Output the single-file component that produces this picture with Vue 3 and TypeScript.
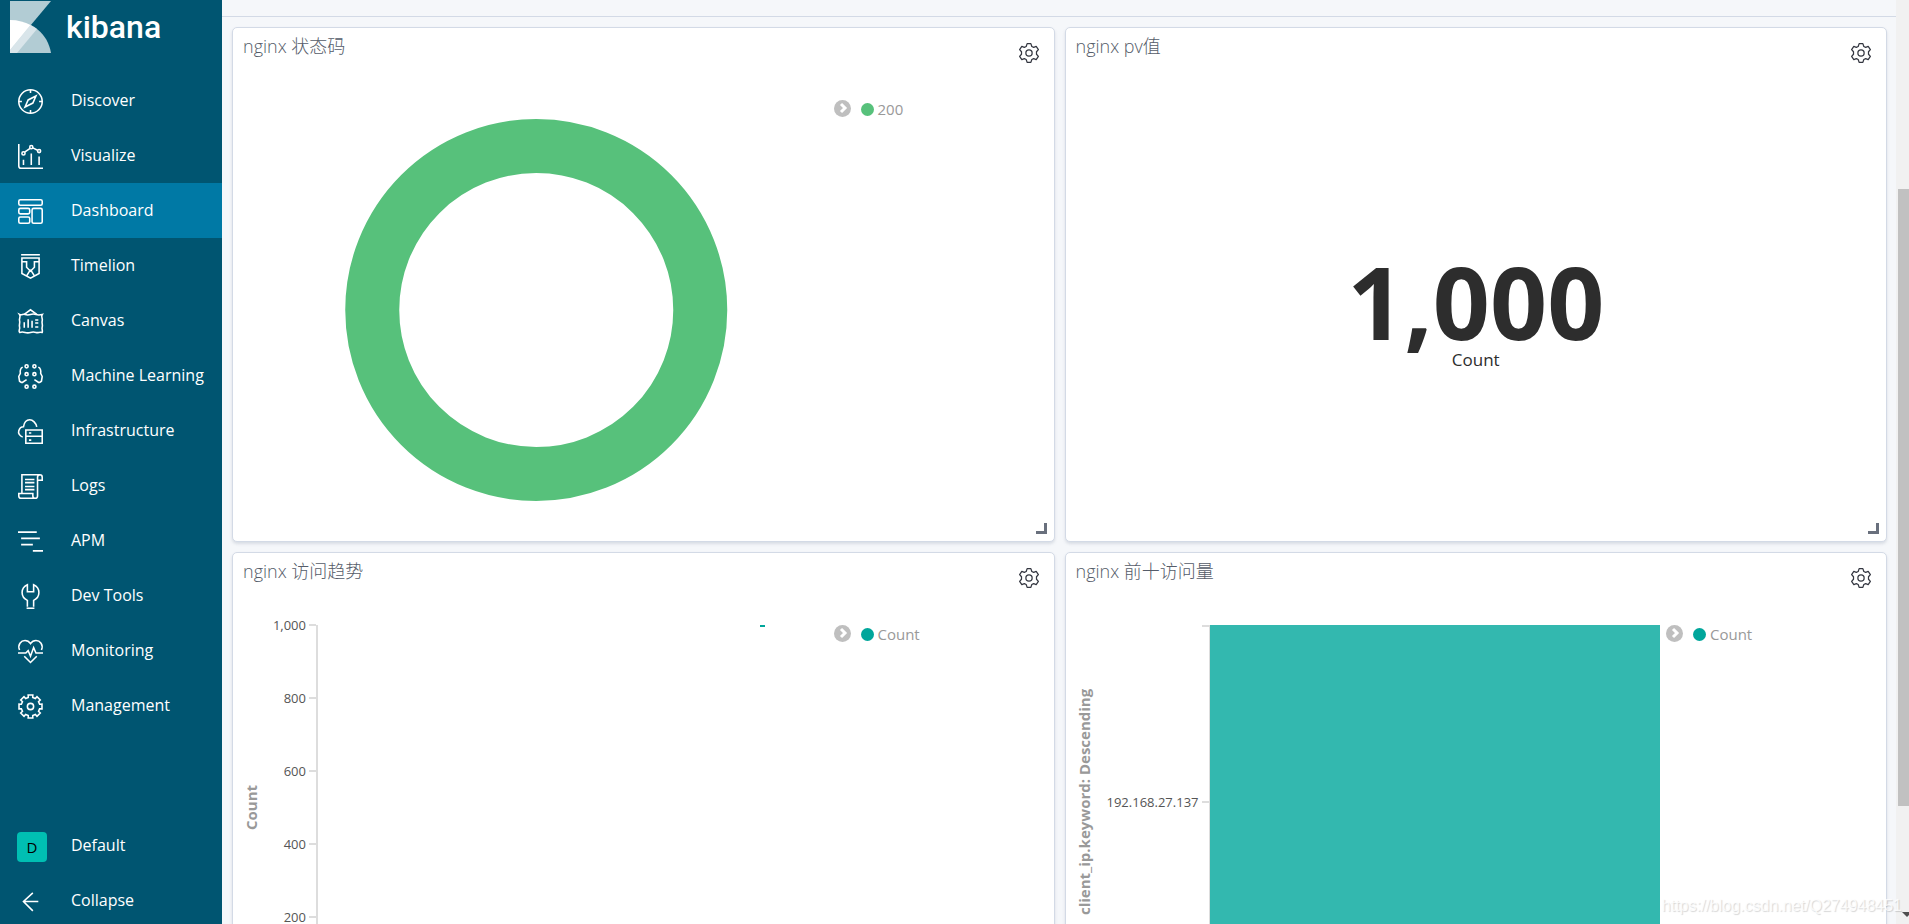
<script setup lang="ts">
interface NavItem {
  label: string
  paths: string[]
}

interface Point {
  x: number
  value: number
}

function gearPath(teeth: number, outer: number, inner: number, tip: number, root: number): string {
  const step = (Math.PI * 2) / teeth
  const points: string[] = []
  for (let i = 0; i < teeth; i++) {
    const mid = i * step - Math.PI / 2
    const corners: [number, number][] = [
      [inner, mid - root],
      [outer, mid - tip],
      [outer, mid + tip],
      [inner, mid + root],
    ]
    for (const [r, a] of corners) {
      points.push(`${(16 + r * Math.cos(a)).toFixed(2)} ${(16 + r * Math.sin(a)).toFixed(2)}`)
    }
  }
  return `M${points.join('L')}Z`
}

const ring = (cx: number, cy: number, r: number) =>
  `M${cx - r} ${cy}a${r} ${r} 0 1 0 ${2 * r} 0a${r} ${r} 0 1 0 ${-2 * r} 0z`

const navItems: NavItem[] = [
  {
    label: 'Discover',
    paths: [ring(16, 16, 15), 'M16 1v4M16 27v4M1 16h4M27 16h4', 'M23 9l-4 9-10 5 4-9z'],
  },
  {
    label: 'Visualize',
    paths: [
      'M1 0v28a3 3 0 0 0 3 3h28',
      ring(7, 12, 2),
      ring(17, 4, 2),
      ring(27, 9, 2),
      'M8.500 10.500l7-5M19 5l6 3M7 20v7M17 12v15M27 16v11',
    ],
  },
  {
    label: 'Dashboard',
    paths: [
      'M3 1h26a2 2 0 0 1 2 2v3a2 2 0 0 1-2 2H3a2 2 0 0 1-2-2V3a2 2 0 0 1 2-2z',
      'M3 12h10a2 2 0 0 1 2 2v3a2 2 0 0 1-2 2H3a2 2 0 0 1-2-2v-3a2 2 0 0 1 2-2z',
      'M3 23h10a2 2 0 0 1 2 2v4a2 2 0 0 1-2 2H3a2 2 0 0 1-2-2v-4a2 2 0 0 1 2-2z',
      'M20 12h9a2 2 0 0 1 2 2v15a2 2 0 0 1-2 2h-9a2 2 0 0 1-2-2V14a2 2 0 0 1 2-2z',
    ],
  },
  {
    label: 'Timelion',
    paths: ['M4 1h24', 'M5 5h22v20l-11 6-11-6z', 'M5 10h6v7l5 5 5-5v-7h6', 'M16 20l-5 8M16 20l5 8'],
  },
  {
    label: 'Canvas',
    paths: [
      'M8 7l8-6 8 6',
      'M2 7c3 1.500 4-1 7 0s4 1 7 0 4-1 7 0 4 1 8 0c-2 3 1 5 0 8s1 5 0 8 1 4 0 7c-4-1-5 1-8 0s-4-1-7 0-4 1-7 0-4-1-7 0c-2-3 1-4 0-7s1-5 0-8 2-5 0-8z',
      'M8 17v7M13 13v11M18 15v9M22 14h4M22 18h4M22 23h4',
    ],
  },
  {
    label: 'Machine Learning',
    paths: [
      ring(11, 3, 2),
      ring(21, 3, 2),
      ring(11, 13, 2),
      ring(21, 13, 2),
      ring(11, 29, 2),
      ring(21, 29, 2),
      'M6 4Q2 6 3 12l-2 4 1 6 3 2M5 24l6-4M26 4q4 2 3 8l2 4-1 6-3 2M27 24l-6-4',
    ],
  },
  {
    label: 'Infrastructure',
    paths: [
      'M6 23C2 22 0 18 1 15s3-5 6-5C8 4 11 1 15 1s8 4 9 9',
      'M10 14h21v17H10zM10 22h21M14 18h3M14 27h3',
    ],
  },
  {
    label: 'Logs',
    paths: [
      'M5 25V1h23a3 3 0 0 1 3 3v4h-6',
      'M28 1a3 3 0 0 0-3 3v24a3 3 0 0 1-3 3H4a3 3 0 0 1-3-3v-3h18v3a3 3 0 0 0 3 3',
      'M9 7h12M9 11h12M9 16h12M9 20h12',
    ],
  },
  { label: 'APM', paths: ['M0 4h24M4 12h24M4 20h15M19 28h13'] },
  {
    label: 'Dev Tools',
    paths: ['M12 29v-8C3 17 3 5 12 1v9h8V1c9 4 9 16 0 20v8', 'M11 31h10'],
  },
  {
    label: 'Monitoring',
    paths: [
      'M2 14C-1 7 4 2 9 2c3 0 5 1 7 4 2-3 4-4 7-4 5 0 10 5 7 12',
      'M0 18h10l3-3 3 7 4-11 3 7h9',
      'M8 22l8 8 8-8',
    ],
  },
  { label: 'Management', paths: [gearPath(8, 15, 12, 0.2, 0.24), ring(16, 16, 4)] },
]

const activeItem = 'Dashboard'
const cog =
  'M13 1h6l1.500 4.500 3 1.500 4-1.500 3.500 5-3 3.500v4l3 3.500-3.500 5-4-1.500-3 1.500L19 31h-6l-1.500-4.500-3-1.500-4 1.500L1 21.500 4 18v-4L1 10.500l3.500-5 4 1.500 3-1.500z'
const cogHole = ring(16, 16, 5)

const countTicks = ['1,000', '800', '600', '400', '200']
const trend: Point[] = [{ x: 86, value: 1000 }]
const maxCount = 1000
</script>

<template>
  <div class="app">
    <aside class="sidebar">
      <a class="brand" href="#">
        <svg class="brand-mark" viewBox="0 0 41 52" aria-hidden="true">
          <path d="M0 0H41L0 49Z" fill="#b2ccd4" />
          <path d="M0 19C22 19 38 33 41 52H0Z" fill="#b2ccd4" />
          <path d="M0 49L20.500 24L27 28L7 52H0Z" fill="#d9e5ea" />
          <path d="M0 19C8 19 15 21 20.500 24L0 49Z" fill="#fff" />
        </svg>
        <span>kibana</span>
      </a>
      <nav class="nav">
        <a
          v-for="item in navItems"
          :key="item.label"
          href="#"
          class="nav-item"
          :class="{ active: item.label === activeItem }"
        >
          <svg class="nav-icon" viewBox="0 0 32 32" aria-hidden="true">
            <path v-for="(d, i) in item.paths" :key="i" :d="d" />
          </svg>
          <span>{{ item.label }}</span>
        </a>
      </nav>
      <div class="nav nav-foot">
        <a class="nav-item" href="#">
          <span class="avatar">D</span>
          <span>Default</span>
        </a>
        <button class="nav-item" type="button">
          <svg class="nav-icon" viewBox="0 0 32 32" aria-hidden="true">
            <path d="M19 5L7 16l12 12M7 16h19" />
          </svg>
          <span>Collapse</span>
        </button>
      </div>
    </aside>

    <main class="content">
      <div class="topbar"></div>
      <div class="grid">
        <section class="panel">
          <header class="panel-head">
            <h2>nginx 状态码</h2>
            <button class="cog" type="button" aria-label="Panel options">
              <svg viewBox="0 0 32 32"><path :d="cog" /><path :d="cogHole" /></svg>
            </button>
          </header>
          <div class="panel-body">
            <svg class="donut" viewBox="0 0 590 437" aria-hidden="true">
              <circle cx="295" cy="219" r="164" />
            </svg>
            <div class="legend">
              <button class="toggle" type="button" aria-label="Toggle legend">
                <svg viewBox="0 0 17 17"><path d="M7 4l4 4-4 4" /></svg>
              </button>
              <span class="dot green"></span>
              <span>200</span>
            </div>
          </div>
        </section>

        <section class="panel">
          <header class="panel-head">
            <h2>nginx pv值</h2>
            <button class="cog" type="button" aria-label="Panel options">
              <svg viewBox="0 0 32 32"><path :d="cog" /><path :d="cogHole" /></svg>
            </button>
          </header>
          <div class="metric">
            <strong>1,000</strong>
            <span>Count</span>
          </div>
        </section>

        <section class="panel">
          <header class="panel-head">
            <h2>nginx 访问趋势</h2>
            <button class="cog" type="button" aria-label="Panel options">
              <svg viewBox="0 0 32 32"><path :d="cog" /><path :d="cogHole" /></svg>
            </button>
          </header>
          <div class="panel-body">
            <div class="chart">
              <div class="axis-title">Count</div>
              <ul class="ticks">
                <li v-for="tick in countTicks" :key="tick"><span>{{ tick }}</span></li>
              </ul>
              <div class="plot">
                <i
                  v-for="point in trend"
                  :key="point.x"
                  class="point"
                  :style="{ left: point.x + '%', bottom: (point.value / maxCount) * 100 + '%' }"
                ></i>
              </div>
            </div>
            <div class="legend">
              <button class="toggle" type="button" aria-label="Toggle legend">
                <svg viewBox="0 0 17 17"><path d="M7 4l4 4-4 4" /></svg>
              </button>
              <span class="dot teal"></span>
              <span>Count</span>
            </div>
          </div>
        </section>

        <section class="panel">
          <header class="panel-head">
            <h2>nginx 前十访问量</h2>
            <button class="cog" type="button" aria-label="Panel options">
              <svg viewBox="0 0 32 32"><path :d="cog" /><path :d="cogHole" /></svg>
            </button>
          </header>
          <div class="panel-body">
            <div class="chart bars">
              <div class="axis-title">client_ip.keyword: Descending</div>
              <div class="category">192.168.27.137</div>
              <div class="plot filled"></div>
            </div>
            <div class="legend">
              <button class="toggle" type="button" aria-label="Toggle legend">
                <svg viewBox="0 0 17 17"><path d="M7 4l4 4-4 4" /></svg>
              </button>
              <span class="dot teal"></span>
              <span>Count</span>
            </div>
          </div>
        </section>
      </div>
    </main>

    <div class="scrollbar" aria-hidden="true">
      <div class="thumb"></div>
      <svg class="arrow" viewBox="0 0 10 5"><path d="M0 0H10L5 5Z" /></svg>
    </div>
    <div class="watermark">https://blog.csdn.net/Q274948451</div>
  </div>
</template>

<style>
body {
  margin: 0;
  overflow: hidden;
}
</style>

<style scoped>
* {
  box-sizing: border-box;
}

.app {
  position: relative;
  display: flex;
  height: 100vh;
  overflow: hidden;
  background: #f5f7fa;
  color: #2d2d2d;
  font-family: 'Open Sans', 'Noto Sans CJK SC', sans-serif;
}

button {
  padding: 0;
  border: 0;
  background: none;
  font: inherit;
  color: inherit;
  cursor: pointer;
}

.sidebar {
  display: flex;
  flex: none;
  flex-direction: column;
  width: 222px;
  background: #005571;
  color: #fff;
}

.brand {
  display: flex;
  flex: none;
  gap: 15px;
  height: 73px;
  padding: 1px 10px;
  color: #fff;
  font: 500 32px/52px Roboto, sans-serif;
  text-decoration: none;
}

.brand-mark {
  width: 41px;
  height: 52px;
}

.nav {
  display: flex;
  flex: none;
  flex-direction: column;
}

.nav-foot {
  margin: auto 0 -4px;
}

.nav-item {
  display: flex;
  align-items: center;
  gap: 28px;
  height: 55px;
  padding: 0 0 0 18px;
  color: #fff;
  font-size: 16px;
  line-height: 24px;
  text-decoration: none;
}

.nav-item > span:last-child {
  padding-bottom: 2px;
}

.nav-item.active {
  background: #0079a5;
}

.nav-icon {
  width: 25px;
  height: 25px;
  margin-top: 2px;
  overflow: visible;
  fill: none;
  stroke: #fff;
  stroke-width: 2;
}

.avatar {
  width: 30px;
  height: 30px;
  margin: 3px -4px 0 -1px;
  border-radius: 4px;
  background: #00bfb3;
  color: #000;
  font-size: 15px;
  line-height: 30px;
  text-align: center;
}

.content {
  flex: 1;
  min-width: 0;
}

.topbar {
  height: 17px;
  border-bottom: 1px solid #d3dae6;
}

.grid {
  display: grid;
  grid-template-columns: 1fr 1fr;
  gap: 10px;
  padding: 10px 9px 10px 10px;
}

.panel {
  position: relative;
  display: flex;
  flex-direction: column;
  height: 515px;
  min-width: 0;
  border: 1px solid #d3dae6;
  border-radius: 5px;
  background: #fff;
  box-shadow: 0 2px 3px rgba(152, 162, 179, 0.3);
}

.panel::after {
  position: absolute;
  right: 7px;
  bottom: 7px;
  width: 8px;
  height: 8px;
  border: solid #69707d;
  border-width: 0 3px 3px 0;
  content: '';
}

.panel-head {
  display: flex;
  flex: none;
  align-items: flex-start;
  justify-content: space-between;
  height: 63px;
  padding: 6px 15px 0 10px;
}

h2 {
  margin: 0;
  color: #555c69;
  font-size: 18px;
  font-weight: 300;
  line-height: 24px;
}

.cog {
  width: 20px;
  height: 20px;
  margin-top: 9px;
}

.cog svg {
  display: block;
  width: 20px;
  height: 20px;
  fill: none;
  stroke: #343741;
  stroke-width: 2;
  stroke-linejoin: round;
}

.panel-body {
  display: flex;
  flex: 1;
  min-height: 0;
  padding: 0 0 13px 8px;
}

.donut {
  flex: 1;
  min-width: 0;
  height: 100%;
}

.donut circle {
  fill: none;
  stroke: #57c17b;
  stroke-width: 54;
}

.legend {
  display: flex;
  flex: none;
  align-items: center;
  width: 222px;
  height: 20px;
  margin-top: 8px;
  color: #999;
  font-size: 15px;
  line-height: 20px;
}

.toggle {
  width: 17px;
  height: 17px;
  margin: 0 10px 2px 2px;
}

.toggle svg {
  display: block;
  width: 17px;
  height: 17px;
  border-radius: 50%;
  background: #bfbfbf;
  fill: none;
  stroke: #fff;
  stroke-width: 3;
}

.dot {
  width: 13px;
  height: 13px;
  margin-right: 4px;
  border-radius: 50%;
}

.green {
  background: #57c17b;
}

.teal {
  background: #00a69b;
}

.metric {
  display: flex;
  flex: 1;
  flex-direction: column;
  align-items: center;
  padding-top: 160px;
  font-size: 17px;
  line-height: 18px;
}

.metric strong {
  font-size: 100px;
  font-weight: 700;
  line-height: 100px;
}

.chart {
  display: flex;
  flex: 1;
  height: 365px;
  margin-top: 9px;
}

.bars {
  height: 354px;
}

.axis-title {
  width: 20px;
  transform: rotate(180deg);
  color: #999;
  font-size: 15px;
  font-weight: 700;
  line-height: 20px;
  text-align: center;
  white-space: nowrap;
  writing-mode: vertical-rl;
}

.ticks {
  width: 55px;
  margin: -10px 0 0;
  padding: 0;
  list-style: none;
}

.ticks li {
  height: 73px;
}

.ticks span,
.category {
  display: flex;
  align-items: center;
  justify-content: flex-end;
  gap: 3px;
  color: #555;
  font-size: 13px;
  line-height: 20px;
}

.ticks span::after,
.category::after {
  width: 7px;
  height: 2px;
  background: #ddd;
  content: '';
}

.category {
  width: 115px;
}

.plot {
  position: relative;
  flex: 1;
  border-left: 2px solid #ddd;
}

.filled {
  margin-right: 4px;
  border-left: 1px solid #ddd;
  background: #33b8af;
}

.filled::before {
  position: absolute;
  top: 0;
  left: -8px;
  width: 8px;
  height: 2px;
  background: #ddd;
  content: '';
}

.point {
  position: absolute;
  width: 5px;
  height: 2px;
  margin-bottom: -2px;
  background: #00a69b;
}

.scrollbar {
  display: grid;
  flex: none;
  grid-template-rows: 189fr 617fr 118fr;
  width: 13px;
  overflow: hidden;
  background: #f1f1f1;
}

.thumb {
  grid-row: 2;
  margin-left: 2px;
  background: #c1c1c1;
}

.arrow {
  grid-row: 3;
  align-self: end;
  width: 10px;
  height: 5px;
  margin: 0 0 7px 6px;
  fill: #505050;
}

.watermark {
  position: absolute;
  right: 7px;
  bottom: 8px;
  color: rgba(255, 255, 255, 0.8);
  font: 16px/20px 'Liberation Sans', sans-serif;
  text-shadow: 1px 1px 1px rgba(0, 0, 0, 0.16);
}
</style>
